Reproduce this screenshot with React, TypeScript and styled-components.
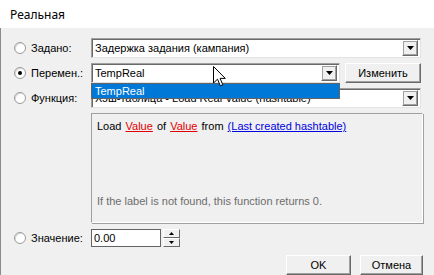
import styled, { createGlobalStyle } from "styled-components";

const Global = createGlobalStyle`
  html, body {
    margin: 0;
    padding: 0;
    background: #fff;
  }
  * {
    box-sizing: border-box;
  }
`;

function Arrow() {
  return (
    <svg width="7" height="4" viewBox="0 0 7 4">
      <path d="M0 0 H7 L3.5 4 Z" fill="#000" />
    </svg>
  );
}

function Radio({ checked, label }: { checked?: boolean; label: string }) {
  return (
    <RadioLabel>
      <RadioCircle>{checked && <RadioDot />}</RadioCircle>
      <span>{label}</span>
    </RadioLabel>
  );
}

function Combo({ value, width }: { value: string; width?: number }) {
  return (
    <ComboBox $width={width}>
      <ComboText>{value}</ComboText>
      <DropButton>
        <Arrow />
      </DropButton>
    </ComboBox>
  );
}

export default function App() {
  return (
    <>
      <Global />
      <Window>
        <TitleBar>Реальная</TitleBar>
        <Body>
          <Row>
            <Radio label="Задано:" />
            <Combo value="Задержка задания (кампания)" />
          </Row>
          <Row>
            <Radio checked label="Перемен.:" />
            <Inline>
              <ComboWrap>
                <Combo value="TempReal" width={249} />
                <DropList>
                  <DropItem>TempReal</DropItem>
                </DropList>
              </ComboWrap>
              <Button $width={76}>Изменить</Button>
            </Inline>
          </Row>
          <Row>
            <Radio label="Функция:" />
            <Combo value="Хэш-таблица - Load Real Value (hashtable)" />
          </Row>
          <PanelRow>
            <Panel>
              <Sentence>
                Load <Param>Value</Param> of <Param>Value</Param> from{" "}
                <Link>(Last created hashtable)</Link>
              </Sentence>
              <Hint>If the label is not found, this function returns 0.</Hint>
            </Panel>
          </PanelRow>
          <ValueRow>
            <Radio label="Значение:" />
            <Inline>
              <NumberInput>0.00</NumberInput>
              <Spinner>
                <SpinHalf>
                  <svg width="5" height="3" viewBox="0 0 5 3">
                    <path d="M0 3 H5 L2.5 0 Z" fill="#000" />
                  </svg>
                </SpinHalf>
                <SpinHalf>
                  <svg width="5" height="3" viewBox="0 0 5 3">
                    <path d="M0 0 H5 L2.5 3 Z" fill="#000" />
                  </svg>
                </SpinHalf>
              </Spinner>
            </Inline>
          </ValueRow>
          <Footer>
            <Button $width={65}>OK</Button>
            <Button $width={63}>Отмена</Button>
          </Footer>
          <Cursor width="13" height="21" viewBox="0 0 13 21">
            <path
              d="M0.5 0.5 V17 L4.5 13.2 L7.3 19.8 L9.8 18.8 L7.1 12.4 H12.3 Z"
              fill="#fff"
              stroke="#000"
              strokeWidth="1"
              strokeLinejoin="miter"
            />
          </Cursor>
        </Body>
      </Window>
    </>
  );
}

const Window = styled.div`
  position: relative;
  width: 434px;
  height: 275px;
  overflow: hidden;
  font-family: "Liberation Sans", Arial, sans-serif;
  font-size: 11px;
  color: #000;
`;

const TitleBar = styled.div`
  height: 28px;
  padding-left: 10px;
  display: flex;
  align-items: center;
  background: #fff;
  font-family: "Noto Sans", "Open Sans", sans-serif;
  font-size: 12px;
  color: #000;
`;

const Body = styled.div`
  position: relative;
  height: 247px;
  background: #f0f0f0;
  border-left: 1px solid #8c8c8c;
  padding: 10px 13px 0 12px;
  display: flex;
  flex-direction: column;
`;

const Row = styled.div`
  display: grid;
  grid-template-columns: 78px 1fr;
  align-items: center;
  height: 20px;
  margin-bottom: 5px;
`;

const ValueRow = styled(Row)`
  height: 18px;
  margin-top: 6px;
  margin-bottom: 8px;
`;

const PanelRow = styled.div`
  padding-left: 78px;
`;

const RadioLabel = styled.label`
  display: flex;
  align-items: center;
  gap: 5px;
  padding-left: 1px;
`;

const RadioCircle = styled.span`
  width: 12px;
  height: 12px;
  border-radius: 50%;
  background: #fff;
  border: 1px solid #9a9a9a;
  box-shadow: inset 1px 1px 0 #dcdcdc;
  display: flex;
  align-items: center;
  justify-content: center;
`;

const RadioDot = styled.span`
  width: 4px;
  height: 4px;
  border-radius: 50%;
  background: #000;
`;

const Inline = styled.div`
  display: flex;
  align-items: center;
  gap: 5px;
`;

const ComboWrap = styled.div`
  position: relative;
`;

const ComboBox = styled.div<{ $width?: number }>`
  width: ${(p) => (p.$width ? `${p.$width}px` : "100%")};
  height: 20px;
  background: #fff;
  border: 1px solid #a0a0a0;
  border-right-color: #e3e3e3;
  border-bottom-color: #e3e3e3;
  box-shadow: inset 1px 1px 0 #696969;
  display: flex;
  align-items: center;
  padding: 1px 2px 1px 3px;
`;

const ComboText = styled.span`
  flex: 1;
  white-space: nowrap;
  overflow: hidden;
`;

const DropButton = styled.span`
  width: 16px;
  height: 16px;
  background: #f0f0f0;
  border: 1px solid #fff;
  border-right-color: #696969;
  border-bottom-color: #696969;
  box-shadow: 1px 1px 0 #a0a0a0 inset, -1px -1px 0 #a0a0a0 inset;
  display: flex;
  align-items: center;
  justify-content: center;
`;

const DropList = styled.div`
  position: absolute;
  left: 0;
  top: 20px;
  width: 249px;
  background: #fff;
  border: 1px solid #646464;
  z-index: 2;
`;

const DropItem = styled.div`
  height: 14px;
  line-height: 14px;
  padding-left: 3px;
  background: #0078d7;
  color: #fff;
`;

const Button = styled.div<{ $width: number }>`
  width: ${(p) => p.$width}px;
  height: 20px;
  background: #f0f0f0;
  border: 1px solid #fff;
  border-right-color: #696969;
  border-bottom-color: #696969;
  box-shadow: inset -1px -1px 0 #a0a0a0;
  display: flex;
  align-items: center;
  justify-content: center;
`;

const Panel = styled.div`
  height: 110px;
  border: 1px solid #a0a0a0;
  border-right-color: #fff;
  border-bottom-color: #fff;
  box-shadow: 1px 1px 0 #a0a0a0;
  margin-right: -2px;
  padding: 6px 6px 15px 5px;
  display: flex;
  flex-direction: column;
  justify-content: space-between;
`;

const Sentence = styled.div`
  white-space: nowrap;
  word-spacing: 1px;
`;

const Param = styled.span`
  color: #e00000;
  text-decoration: underline;
`;

const Link = styled.span`
  color: #0000e0;
  text-decoration: underline;
  word-spacing: 0;
`;

const Hint = styled.div`
  color: #6d6d6d;
`;

const NumberInput = styled.div`
  width: 70px;
  height: 18px;
  background: #fff;
  border: 1px solid #646464;
  padding: 1px 2px;
  display: flex;
  align-items: center;
`;

const Spinner = styled.div`
  display: flex;
  flex-direction: column;
  margin-left: -3px;
`;

const SpinHalf = styled.div`
  width: 17px;
  height: 9px;
  background: #f0f0f0;
  border: 1px solid #fff;
  border-right-color: #696969;
  border-bottom-color: #696969;
  display: flex;
  align-items: center;
  justify-content: center;
`;

const Footer = styled.div`
  display: flex;
  justify-content: flex-end;
  gap: 9px;
  margin-right: -2px;
`;

const Cursor = styled.svg`
  position: absolute;
  left: 212px;
  top: 38px;
  z-index: 3;
`;
